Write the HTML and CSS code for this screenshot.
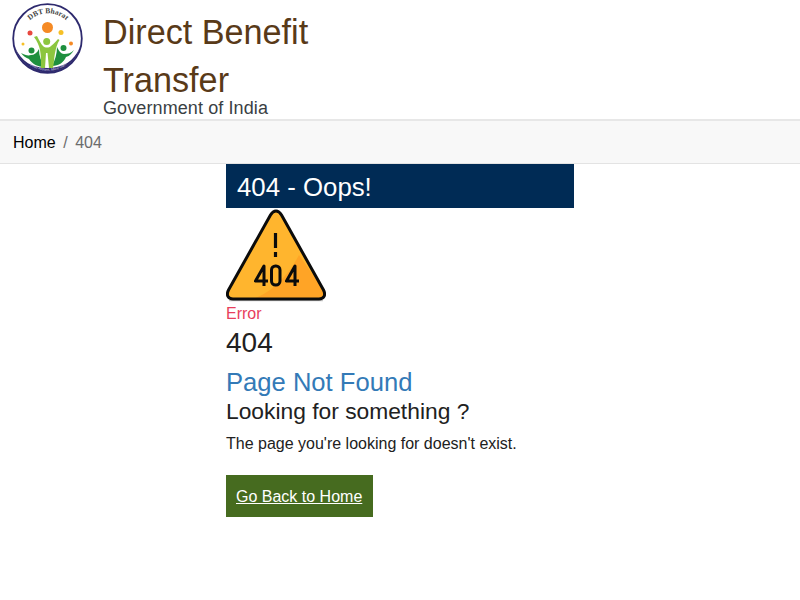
FILE: index.html
```html
<!DOCTYPE html>
<html>
<head>
    <title>Direct Benefit Transfer</title>
    <link rel="stylesheet" href="styles.css">
</head>
<body>
    <header class="site-header">
        <svg class="logo" viewBox="0 0 72 72" width="72" height="72">
            <defs>
                <path id="arc-top" d="M10 30 A27 27 0 0 1 62 30"/>
                <path id="arc-bottom" d="M9 52 A31 31 0 0 0 63 52"/>
            </defs>
            <circle cx="35.500" cy="35.500" r="34.300" fill="#fff" stroke="#2e2a6e" stroke-width="1.800"/>
            <path d="M3 44 A33.500 33.500 0 0 0 68 44 C62 59 50 65 35.500 65 C21 65 9 59 3 44Z" fill="#2e2a6e"/>
            <text class="logo-top"><textPath href="#arc-top" startOffset="50%" text-anchor="middle">DBT Bharat</textPath></text>
            <text class="logo-bottom"><textPath href="#arc-bottom" startOffset="50%" text-anchor="middle">Good Actions, More Gain</textPath></text>
            <circle cx="35.500" cy="24.500" r="5.500" fill="#f58a25"/>
            <circle cx="18" cy="30" r="2.500" fill="#e8483f"/>
            <circle cx="49" cy="29.500" r="2.500" fill="#f6c026"/>
            <circle cx="11" cy="41" r="1.500" fill="#f6c026"/>
            <circle cx="59" cy="40.500" r="2" fill="#f58a25"/>
            <path d="M9 50 C13 52 16 53 19 52 C22 52 25 50 27 46 C27 53 29 59 33 64 C26 64 20 61 17 56 C14 55 11 53 9 50Z" fill="#1e8f3e"/>
            <circle cx="19.500" cy="47.500" r="3" fill="#1e8f3e"/>
            <path d="M62 47 C59 50 56 51 52 51 C49 51 47 48 45 44 C45 51 43 57 40 63 C47 63 52 59 54 54 C58 53 60 50 62 47Z" fill="#1e8f3e"/>
            <circle cx="51.500" cy="45" r="3" fill="#1e8f3e"/>
            <circle cx="34.700" cy="38.500" r="3.500" fill="#8cc63f"/>
            <path d="M22 34 L25 33 C27 37 29 41 31 43 C33 45 37 45 39 43 C42 41 44 38 46 36 L47.500 37 C45 41 44 45 43 50 C42 55 42 60 41 65 L37 65 L35.500 50 L34 50 L33 65 L29 65 C29 58 29 52 28 47 C27 42 25 38 22 34Z" fill="#8cc63f"/>
        </svg>
        <div class="brand">
            <h1>Direct Benefit Transfer</h1>
            <span class="gov">Government of India</span>
        </div>
    </header>

    <nav class="breadcrumb">
        <a href="#">Home</a>
        <span class="sep">/</span>
        <span class="current">404</span>
    </nav>

    <main class="error-box">
        <h2 class="error-title">404 - Oops!</h2>
        <svg class="warning" viewBox="0 0 100 94" width="100" height="94">
            <path d="M50 3 C47.500 3 46 4.500 44.500 7 L2.500 82 C0 87 2 91 7 91 L93 91 C98 91 100 87 97.500 82 L55.500 7 C54 4.500 52.500 3 50 3Z" fill="#ffb52e"/>
            <path d="M73 47 L97.500 82 C100 87 98 91 93 91 L27 91 C45 85 62 68 73 47Z" fill="#ffa426"/>
            <path d="M3 92.500 L97 92.500" fill="none" stroke="#c9c9c9" stroke-width="1.500"/>
            <path d="M50 3 C47.500 3 46 4.500 44.500 7 L2.500 82 C0 87 2 91 7 91 L93 91 C98 91 100 87 97.500 82 L55.500 7 C54 4.500 52.500 3 50 3Z" fill="none" stroke="#0b0b0b" stroke-width="3" stroke-linejoin="round"/>
            <path d="M49.500 25 L49.500 40 M49.500 44 L49.500 49" fill="none" stroke="#0b0b0b" stroke-width="3.200"/>
            <path d="M38 78 L38 58 L29.500 73 L42 73 M69 78 L69 58 L60.500 73 L73 73" fill="none" stroke="#0b0b0b" stroke-width="3" stroke-linejoin="round"/>
            <rect x="45.500" y="58" width="8.500" height="19" rx="4" fill="none" stroke="#0b0b0b" stroke-width="3"/>
        </svg>
        <div class="error-label">Error</div>
        <div class="error-code">404</div>
        <h3 class="not-found">Page Not Found</h3>
        <h4 class="looking">Looking for something ?</h4>
        <p class="message">The page you're looking for doesn't exist.</p>
        <a class="home-btn" href="#">Go Back to Home</a>
    </main>
</body>
</html>
```

FILE: styles.css
```css
body {
    font-family: "Liberation Sans", Arial, sans-serif;
    background-color: #fff;
    color: #212121;
    margin: 0;
    padding: 0;
}

a {
    color: inherit;
}

.site-header {
    display: flex;
    height: 119px;
    padding-left: 12px;
    overflow: hidden;
}

.logo {
    flex: none;
    margin-top: 3px;
}

.brand {
    width: 240px;
    margin-left: 19px;
    padding-top: 8px;
}

.brand h1 {
    margin: 0;
    font-size: 34.2px;
    font-weight: normal;
    line-height: 48px;
    color: #593a18;
}

.gov {
    display: block;
    margin-top: -5px;
    font-size: 18px;
    line-height: 19px;
    letter-spacing: 0.1px;
    color: #3a3f44;
}

.logo-top {
    font-family: "Liberation Serif", serif;
    font-size: 7.5px;
    font-weight: bold;
    fill: #444;
}

.logo-bottom {
    font-family: "Liberation Sans", sans-serif;
    font-size: 3.5px;
    fill: #cfcfe0;
}

.breadcrumb {
    display: flex;
    align-items: center;
    gap: 7.5px;
    height: 41px;
    padding-top: 1px;
    padding-left: 13px;
    background-color: #f8f8f8;
    border-top: 2px solid #e7e7e7;
    border-bottom: 1px solid #e3e3e3;
    font-size: 16px;
}

.breadcrumb a {
    color: #000;
    text-decoration: none;
}

.sep,
.current {
    color: #6c6c6c;
}

.error-box {
    width: 348px;
    margin: 0 auto;
}

.error-title {
    margin: 0;
    padding-left: 11px;
    height: 44px;
    font-size: 25.8px;
    font-weight: normal;
    line-height: 47px;
    color: #fff;
    background-color: #002b55;
}

.warning {
    display: block;
}

.error-label {
    margin-top: 2px;
    font-size: 16px;
    line-height: 20px;
    color: #e83e5c;
}

.error-code {
    margin-top: -1px;
    font-size: 28px;
    line-height: 40px;
    color: #212121;
}

.not-found {
    margin: 4px 0 0;
    font-size: 25.6px;
    font-weight: normal;
    line-height: 30px;
    color: #337ab7;
}

.looking {
    margin: 0;
    font-size: 22.8px;
    font-weight: normal;
    line-height: 28px;
    color: #212121;
}

.message {
    margin: 7px 0 0;
    font-size: 16px;
    line-height: 24px;
    color: #212121;
}

.home-btn {
    display: inline-block;
    margin-top: 19px;
    padding: 0 11px 0 10px;
    height: 42px;
    line-height: 44px;
    font-size: 16px;
    color: #fff;
    background-color: #466b1f;
}
```
